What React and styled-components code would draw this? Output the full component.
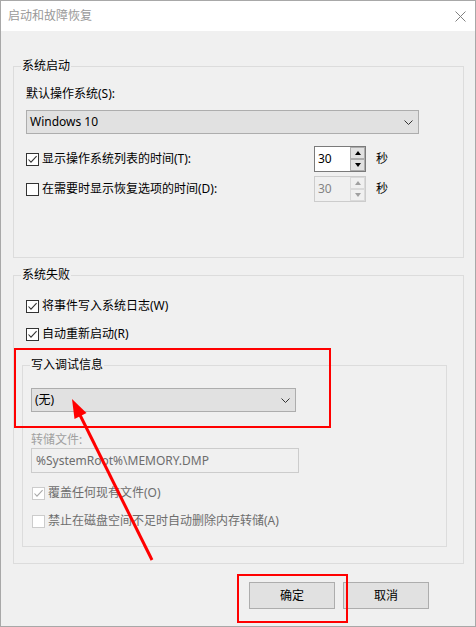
import React from 'react';
import styled, { createGlobalStyle } from 'styled-components';

const Global = createGlobalStyle`
  html, body { margin: 0; padding: 0; background: #fff; }
  * { box-sizing: border-box; }
  body {
    font-family: "Noto Sans", "Noto Sans CJK SC", sans-serif;
    font-size: 12px;
    line-height: 16px;
    color: #000;
  }
`;

const Window = styled.div`
  position: relative;
  width: 476px;
  height: 627px;
  border: 1px solid #a8a8a8;
  background: #f0f0f0;
  display: flex;
  flex-direction: column;
`;

const TitleBar = styled.div`
  height: 30px;
  flex: 0 0 30px;
  background: #fff;
  display: flex;
  align-items: center;
  justify-content: space-between;
  padding: 0 9px 0 7px;
  color: #999;
`;

const Body = styled.div`
  flex: 1;
  padding: 35px 11px 0 12px;
  display: flex;
  flex-direction: column;
`;

const Group = styled.div`
  border: 1px solid #dcdcdc;
  height: ${(p) => p.$h}px;
  width: ${(p) => (p.$w ? `${p.$w}px` : 'auto')};
  margin-top: ${(p) => p.$mt || 0}px;
  margin-left: ${(p) => p.$ml || 0}px;
  display: flex;
  flex-direction: column;
  align-items: flex-start;
`;

const GroupTitle = styled.div`
  margin: -9px 0 0 7px;
  padding: 0 1px;
  height: 16px;
  background: #f0f0f0;
  color: #000;
`;

const GroupBody = styled.div`
  padding-left: ${(p) => p.$pl}px;
  display: flex;
  flex-direction: column;
  align-items: flex-start;
  align-self: stretch;
`;

const Label = styled.div`
  margin-top: ${(p) => p.$mt || 0}px;
  height: 16px;
  color: ${(p) => (p.$disabled ? '#a0a0a0' : '#000')};
`;

const Combo = styled.div`
  margin-top: ${(p) => p.$mt || 0}px;
  width: ${(p) => p.$w}px;
  height: 24px;
  border: 1px solid #adadad;
  background: #e1e1e1;
  display: flex;
  align-items: center;
  justify-content: space-between;
  padding: 0 5px 0 3px;
`;

const TextField = styled.div`
  margin-top: ${(p) => p.$mt || 0}px;
  width: ${(p) => p.$w}px;
  height: 25px;
  border: 1px solid #cccccc;
  background: #f0f0f0;
  color: #6d6d6d;
  display: flex;
  align-items: center;
  padding-left: 4px;
`;

const CheckRow = styled.label`
  margin-top: ${(p) => p.$mt || 0}px;
  margin-left: ${(p) => p.$ml || 0}px;
  height: 16px;
  display: flex;
  align-items: center;
  color: ${(p) => (p.$disabled ? '#6d6d6d' : '#000')};
`;

const Box = styled.span`
  width: 13px;
  height: 13px;
  flex: 0 0 13px;
  border: 1px solid ${(p) => (p.$disabled ? '#cccccc' : '#333333')};
  background: #fff;
  margin-right: 3px;
  display: flex;
  align-items: center;
  justify-content: center;
`;

const SpinRow = styled.div`
  margin-top: ${(p) => p.$mt || 0}px;
  height: 26px;
  display: flex;
  align-items: center;
`;

const SpinLabelArea = styled.div`
  width: 288px;
  flex: 0 0 288px;
  display: flex;
  align-items: center;
`;

const Spinner = styled.div`
  width: 52px;
  height: 26px;
  border: 1px solid ${(p) => (p.$disabled ? '#cccccc' : '#7a7a7a')};
  background: ${(p) => (p.$disabled ? '#f0f0f0' : '#fff')};
  color: ${(p) => (p.$disabled ? '#838383' : '#000')};
  display: flex;
`;

const SpinValue = styled.div`
  flex: 1;
  display: flex;
  align-items: center;
  padding-left: 3px;
`;

const SpinButtons = styled.div`
  width: 15px;
  display: flex;
  flex-direction: column;
`;

const SpinButton = styled.div`
  height: 12px;
  border: 1px solid ${(p) => (p.$disabled ? '#dadada' : '#adadad')};
  background: ${(p) => (p.$disabled ? '#f0f0f0' : '#e1e1e1')};
  display: flex;
  align-items: center;
  justify-content: center;
`;

const Tri = styled.span`
  width: 0;
  height: 0;
  border-left: 3.5px solid transparent;
  border-right: 3.5px solid transparent;
  ${(p) =>
    p.$up
      ? `border-bottom: 4px solid ${p.$disabled ? '#a0a0a0' : '#000'};`
      : `border-top: 4px solid ${p.$disabled ? '#a0a0a0' : '#000'};`}
`;

const Unit = styled.span`
  margin-left: 10px;
`;

const ButtonRow = styled.div`
  margin-top: 18px;
  display: flex;
  justify-content: flex-end;
  gap: 8px;
  padding-right: 35px;
`;

const Button = styled.button`
  width: 86px;
  height: 27px;
  border: 1px solid #adadad;
  background: #e1e1e1;
  font: inherit;
  color: #000;
  padding: 0;
`;

const Overlay = styled.svg`
  position: absolute;
  top: -1px;
  left: -1px;
  width: 476px;
  height: 627px;
  pointer-events: none;
`;

const Check = ({ disabled }) => (
  <svg width="11" height="11" viewBox="0 0 11 11">
    <polyline
      points="1.5,5.5 4,8.2 9.6,2.2"
      fill="none"
      stroke={disabled ? '#a8a8a8' : '#333'}
      strokeWidth="1.1"
    />
  </svg>
);

const Chevron = () => (
  <svg width="9" height="5" viewBox="0 0 9 5">
    <polyline points="0.5,0.5 4.5,4.5 8.5,0.5" fill="none" stroke="#333" strokeWidth="1" />
  </svg>
);

const CheckBox = ({ checked, disabled, children, mt, ml }) => (
  <CheckRow $mt={mt} $ml={ml} $disabled={disabled}>
    <Box $disabled={disabled}>{checked && <Check disabled={disabled} />}</Box>
    {children}
  </CheckRow>
);

const Spin = ({ value, disabled }) => (
  <Spinner $disabled={disabled}>
    <SpinValue>{value}</SpinValue>
    <SpinButtons>
      <SpinButton $disabled={disabled}>
        <Tri $up $disabled={disabled} />
      </SpinButton>
      <SpinButton $disabled={disabled}>
        <Tri $disabled={disabled} />
      </SpinButton>
    </SpinButtons>
  </Spinner>
);

export default function App() {
  return (
    <>
      <Global />
      <Window>
        <TitleBar>
          <span>启动和故障恢复</span>
          <svg width="11" height="11" viewBox="0 0 11 11">
            <path d="M0.5 0.5 L10.5 10.5 M10.5 0.5 L0.5 10.5" stroke="#808080" strokeWidth="1" />
          </svg>
        </TitleBar>
        <Body>
          <Group $h={192}>
            <GroupTitle>系统启动</GroupTitle>
            <GroupBody $pl={12}>
              <Label $mt={12}>默认操作系统(S):</Label>
              <Combo $mt={8} $w={393}>
                <span>Windows 10</span>
                <Chevron />
              </Combo>
              <SpinRow $mt={12}>
                <SpinLabelArea>
                  <CheckBox checked>显示操作系统列表的时间(T):</CheckBox>
                </SpinLabelArea>
                <Spin value="30" />
                <Unit>秒</Unit>
              </SpinRow>
              <SpinRow $mt={4}>
                <SpinLabelArea>
                  <CheckBox>在需要时显示恢复选项的时间(D):</CheckBox>
                </SpinLabelArea>
                <Spin value="30" disabled />
                <Unit>秒</Unit>
              </SpinRow>
            </GroupBody>
          </Group>

          <Group $h={289} $mt={17}>
            <GroupTitle>系统失败</GroupTitle>
            <GroupBody $pl={12}>
              <CheckBox checked mt={15}>将事件写入系统日志(W)</CheckBox>
              <CheckBox checked mt={12}>自动重新启动(R)</CheckBox>
              <Group $h={182} $w={425} $mt={23} $ml={-4}>
                <GroupTitle>写入调试信息</GroupTitle>
                <GroupBody $pl={8}>
                  <Combo $mt={15} $w={265}>
                    <span>(无)</span>
                    <Chevron />
                  </Combo>
                  <Label $mt={20} $disabled>转储文件:</Label>
                  <TextField $w={268}>%SystemRoot%\MEMORY.DMP</TextField>
                  <CheckBox checked disabled mt={12} ml={1}>覆盖任何现有文件(O)</CheckBox>
                  <CheckBox disabled mt={12} ml={1}>禁止在磁盘空间不足时自动删除内存转储(A)</CheckBox>
                </GroupBody>
              </Group>
            </GroupBody>
          </Group>

          <ButtonRow>
            <Button>确定</Button>
            <Button>取消</Button>
          </ButtonRow>
        </Body>

        <Overlay viewBox="0 0 476 627">
          <rect x="15" y="349" width="315" height="78" fill="none" stroke="#ff0000" strokeWidth="2" />
          <rect x="238" y="575" width="109" height="47" fill="none" stroke="#ff0000" strokeWidth="2" />
          <line x1="152" y1="560" x2="79" y2="413" stroke="#ff0000" strokeWidth="3" />
          <polygon points="72,399 86.5,413 74.5,419" fill="#ff0000" />
        </Overlay>
      </Window>
    </>
  );
}
